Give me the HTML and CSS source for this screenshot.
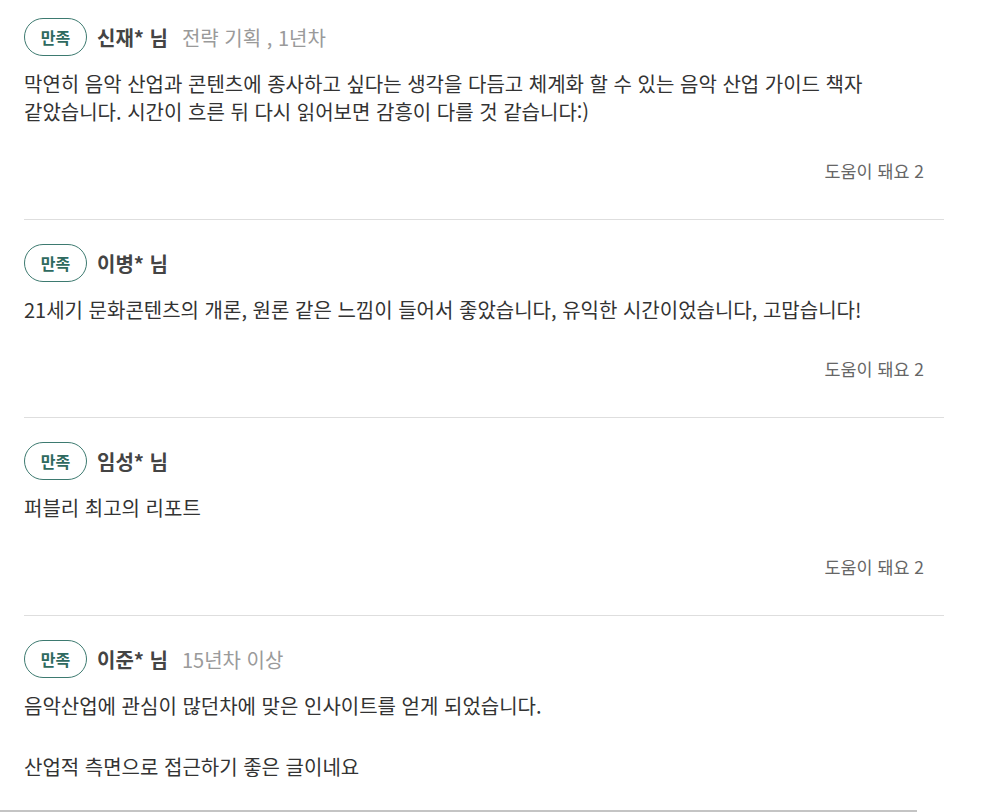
FILE: index.html
```html
<!DOCTYPE html>
<html lang="ko">
<head>
<meta charset="utf-8">
<link rel="stylesheet" href="styles.css">
</head>
<body>
<div class="reviews">
  <div class="review first">
    <div class="head">
      <span class="badge">만족</span>
      <span class="name">신재* 님</span>
      <span class="meta">전략 기획 , 1년차</span>
    </div>
    <div class="body">
      <p>막연히 음악 산업과 콘텐츠에 종사하고 싶다는 생각을 다듬고 체계화 할 수 있는 음악 산업 가이드 책자<br>같았습니다. 시간이 흐른 뒤 다시 읽어보면 감흥이 다를 것 같습니다:)</p>
    </div>
    <div class="helpful">도움이 돼요 2</div>
  </div>
  <div class="review">
    <div class="head">
      <span class="badge">만족</span>
      <span class="name">이병* 님</span>
    </div>
    <div class="body">
      <p>21세기 문화콘텐츠의 개론, 원론 같은 느낌이 들어서 좋았습니다, 유익한 시간이었습니다, 고맙습니다!</p>
    </div>
    <div class="helpful">도움이 돼요 2</div>
  </div>
  <div class="review">
    <div class="head">
      <span class="badge">만족</span>
      <span class="name">임성* 님</span>
    </div>
    <div class="body">
      <p>퍼블리 최고의 리포트</p>
    </div>
    <div class="helpful">도움이 돼요 2</div>
  </div>
  <div class="review last">
    <div class="head">
      <span class="badge">만족</span>
      <span class="name">이준* 님</span>
      <span class="meta">15년차 이상</span>
    </div>
    <div class="body">
      <p>음악산업에 관심이 많던차에 맞은 인사이트를 얻게 되었습니다.</p>
      <p>산업적 측면으로 접근하기 좋은 글이네요</p>
    </div>
  </div>
</div>
<div class="scrollbar"></div>
</body>
</html>
```
FILE: styles.css
```css
html, body {
  margin: 0;
  padding: 0;
  background: #fff;
}
body {
  font-family: "Noto Sans CJK KR", "Noto Sans", sans-serif;
  color: #333;
  height: 812px;
  overflow: hidden;
  position: relative;
}
.reviews {
  margin: 0 40px 0 24px;
}
.review {
  padding: 24px 20px 36px 0;
  border-bottom: 1px solid #dedede;
}
.review.first {
  padding-top: 18px;
}
.review.last {
  border-bottom: none;
}
.head {
  display: flex;
  align-items: center;
  height: 38px;
}
.badge {
  box-sizing: border-box;
  display: inline-flex;
  align-items: center;
  justify-content: center;
  width: 63px;
  height: 38px;
  border: 1px solid #3d7a70;
  border-radius: 19px;
  color: #2f6a60;
  font-weight: 700;
  font-size: 16px;
}
.name {
  margin-left: 10px;
  font-size: 20px;
  font-weight: 700;
  color: #444;
}
.meta {
  margin-left: 14px;
  font-size: 20px;
  color: #9a9a9a;
}
.body {
  margin-top: 14px;
  font-size: 20px;
  line-height: 28px;
  color: #333;
}
.body p {
  margin: 0;
}
.body p + p {
  margin-top: 33px;
}
.helpful {
  margin-top: 33px;
  text-align: right;
  font-size: 17.4px;
  line-height: 24px;
  color: #666;
}
.scrollbar {
  position: absolute;
  left: 0;
  bottom: 0;
  width: 917px;
  height: 2px;
  background: #c4c4c4;
}
```
